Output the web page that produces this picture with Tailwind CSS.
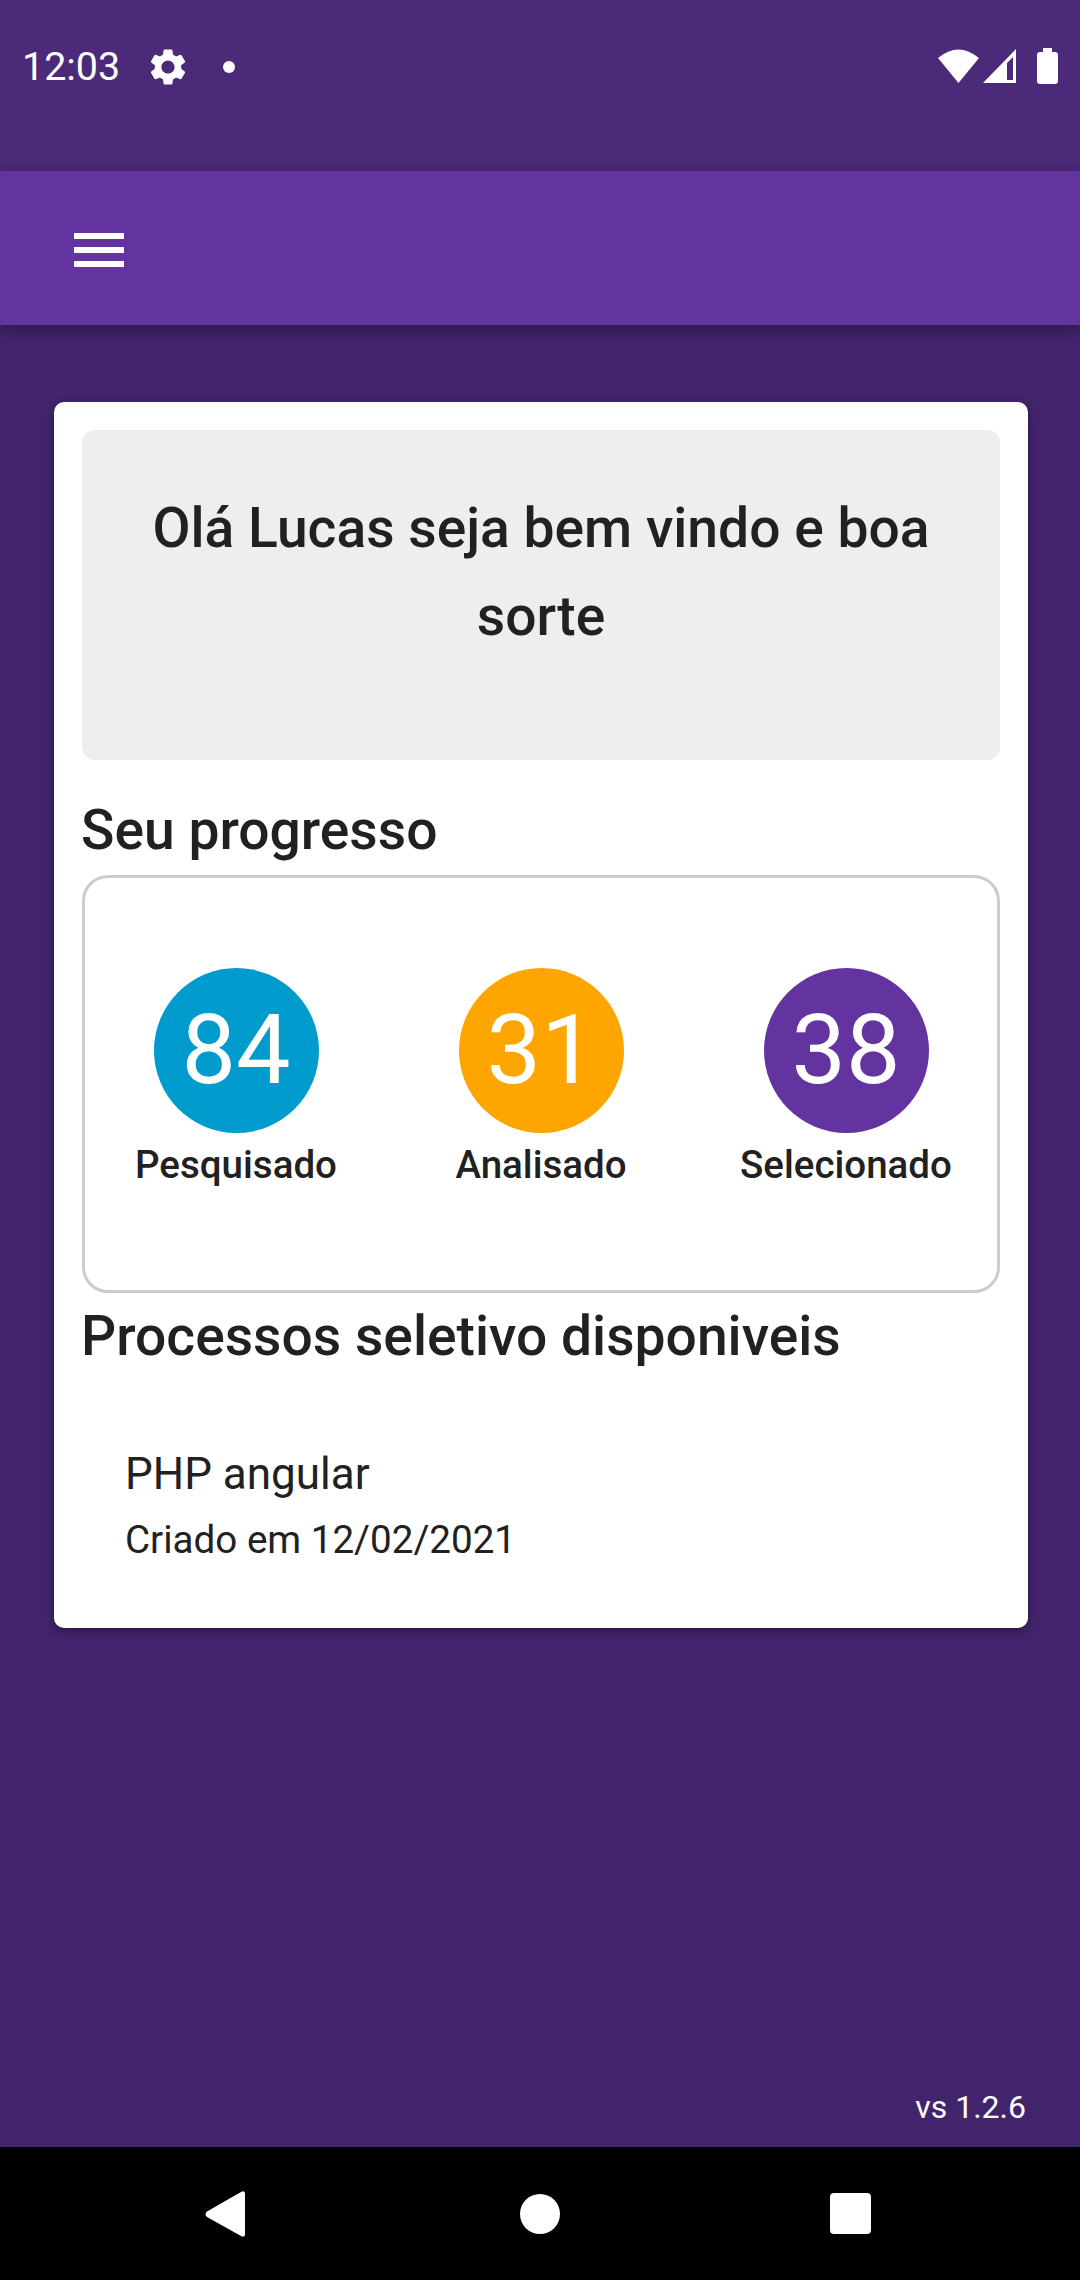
<!DOCTYPE html>
<html>
  <head>
    <title>Progresso</title>
    <script src="https://cdn.jsdelivr.net/npm/@tailwindcss/browser@4"></script>
  </head>
  <body class="bg-[#42246c] font-['Roboto',sans-serif]">
    <div class="relative flex flex-col w-[1080px] h-[2280px] overflow-hidden">
      <!-- status bar -->
      <div class="h-[171px] bg-[#4a2a79] shrink-0 flex items-start justify-between pt-[43px] text-white">
        <div class="flex items-center h-[48px] pl-[22px]">
          <span class="text-[39.4px] leading-[48px] w-[124px]">12:03</span>
          <svg width="44" height="44" viewBox="0 0 24 24" fill="#fff"><path d="M19.14 12.94c.04-.3.06-.61.06-.94 0-.32-.02-.64-.07-.94l2.03-1.58a.49.49 0 0 0 .12-.61l-1.92-3.32a.488.488 0 0 0-.59-.22l-2.39.96c-.5-.38-1.03-.7-1.62-.94l-.36-2.54a.484.484 0 0 0-.48-.41h-3.84c-.24 0-.43.17-.47.41l-.36 2.54c-.59.24-1.13.57-1.62.94l-2.39-.96c-.22-.08-.47 0-.59.22L2.74 8.87c-.12.21-.08.47.12.61l2.03 1.58c-.05.3-.09.63-.09.94s.02.64.07.94l-2.03 1.58a.49.49 0 0 0-.12.61l1.92 3.32c.12.22.37.29.59.22l2.39-.96c.5.38 1.03.7 1.62.94l.36 2.54c.05.24.24.41.48.41h3.84c.24 0 .44-.17.47-.41l.36-2.54c.59-.24 1.13-.56 1.62-.94l2.39.96c.22.08.47 0 .59-.22l1.92-3.32c.12-.22.07-.47-.12-.61l-2.01-1.58zM12 15.6c-1.98 0-3.6-1.62-3.6-3.6s1.62-3.6 3.6-3.6 3.6 1.62 3.6 3.6-1.62 3.6-3.6 3.6z"/></svg>
          <span class="ml-[33px] w-[12px] h-[12px] rounded-full bg-white"></span>
        </div>
        <svg class="mr-[22px] mt-[5px]" width="120" height="38" viewBox="0 0 120 38" fill="#fff">
          <path d="M0 10 Q20.500 -7 41 10 L20.500 35 Z"/>
          <path d="M45 35 L78 1 V35 Z M69 32 H75 V9 L69 15 Z" fill-rule="evenodd"/>
          <path d="M99 7 Q99 4 102 4 H105 V0 H114 V4 H117 Q120 4 120 7 V33 Q120 36 117 36 H102 Q99 36 99 33 Z"/>
        </svg>
      </div>
      <!-- toolbar -->
      <div class="h-[154px] bg-[#63349f] shrink-0 flex items-center pl-[74px] shadow-[0_4px_14px_rgba(0,0,0,0.35)] relative">
        <div class="flex flex-col gap-[8px] w-[50px] mt-[4px]">
          <div class="h-[6px] bg-white"></div>
          <div class="h-[6px] bg-white"></div>
          <div class="h-[6px] bg-white"></div>
        </div>
      </div>
      <!-- content -->
      <div class="flex-1 pl-[54px] pr-[52px] pt-[77px] flex flex-col">
        <div class="bg-white rounded-[10px] h-[1226px] p-[28px] shadow-[0_3px_8px_rgba(0,0,0,0.4)] text-[#212121]">
          <div class="bg-[#eeeeee] rounded-[13px] h-[330px] pt-[54px] px-[40px] text-center text-[55.2px] leading-[88px] font-medium">
            Olá Lucas seja bem vindo e boa sorte
          </div>
          <div class="text-[55.2px] leading-[60px] font-medium mt-[40px] -ml-[1px]">Seu progresso</div>
          <div class="mt-[15px] h-[418px] border-[3px] border-[#cccccc] rounded-[26px] pt-[90px] flex justify-center">
            <div class="w-[305px] shrink-0 flex flex-col items-center">
              <div class="w-[165px] h-[165px] rounded-full bg-[#009bcd] flex items-center justify-center text-white text-[97px] leading-none">84</div>
              <div class="mt-[8px] text-[38.5px] leading-[48px] font-medium">Pesquisado</div>
            </div>
            <div class="w-[305px] shrink-0 flex flex-col items-center">
              <div class="w-[165px] h-[165px] rounded-full bg-[#ffa500] flex items-center justify-center text-white text-[97px] leading-none">31</div>
              <div class="mt-[8px] text-[38.5px] leading-[48px] font-medium">Analisado</div>
            </div>
            <div class="w-[305px] shrink-0 flex flex-col items-center">
              <div class="w-[165px] h-[165px] rounded-full bg-[#63349f] flex items-center justify-center text-white text-[97px] leading-none">38</div>
              <div class="mt-[8px] text-[38.5px] leading-[48px] font-medium">Selecionado</div>
            </div>
          </div>
          <div class="text-[55.2px] leading-[60px] font-medium mt-[13px] -ml-[1px]">Processos seletivo disponiveis</div>
          <div class="pl-[43px] mt-[84px]">
            <div class="text-[44px] leading-[48px]">PHP angular</div>
            <div class="text-[38.6px] leading-[48px] mt-[18px]">Criado em 12/02/2021</div>
          </div>
        </div>
        <div class="mt-auto mb-[20px] mr-[2px] text-right text-white text-[32px] leading-[40px]">vs 1.2.6</div>
      </div>
      <!-- nav bar -->
      <div class="h-[133px] bg-black shrink-0 flex items-center relative">
        <div class="w-[1080px] h-[46px] flex items-center">
          <svg class="ml-[205px]" width="42" height="46" viewBox="0 0 42 46" fill="#fff"><path d="M2 20.500 L36 1 Q39 -1 40 2 V44 Q39 47 36 45 L2 26 Q-1 23 2 20.500 Z"/></svg>
          <div class="ml-[273px] w-[40px] h-[40px] rounded-full bg-white"></div>
          <div class="ml-[270px] w-[41px] h-[41px] rounded-[4px] bg-white"></div>
        </div>
      </div>
    </div>
  </body>
</html>
